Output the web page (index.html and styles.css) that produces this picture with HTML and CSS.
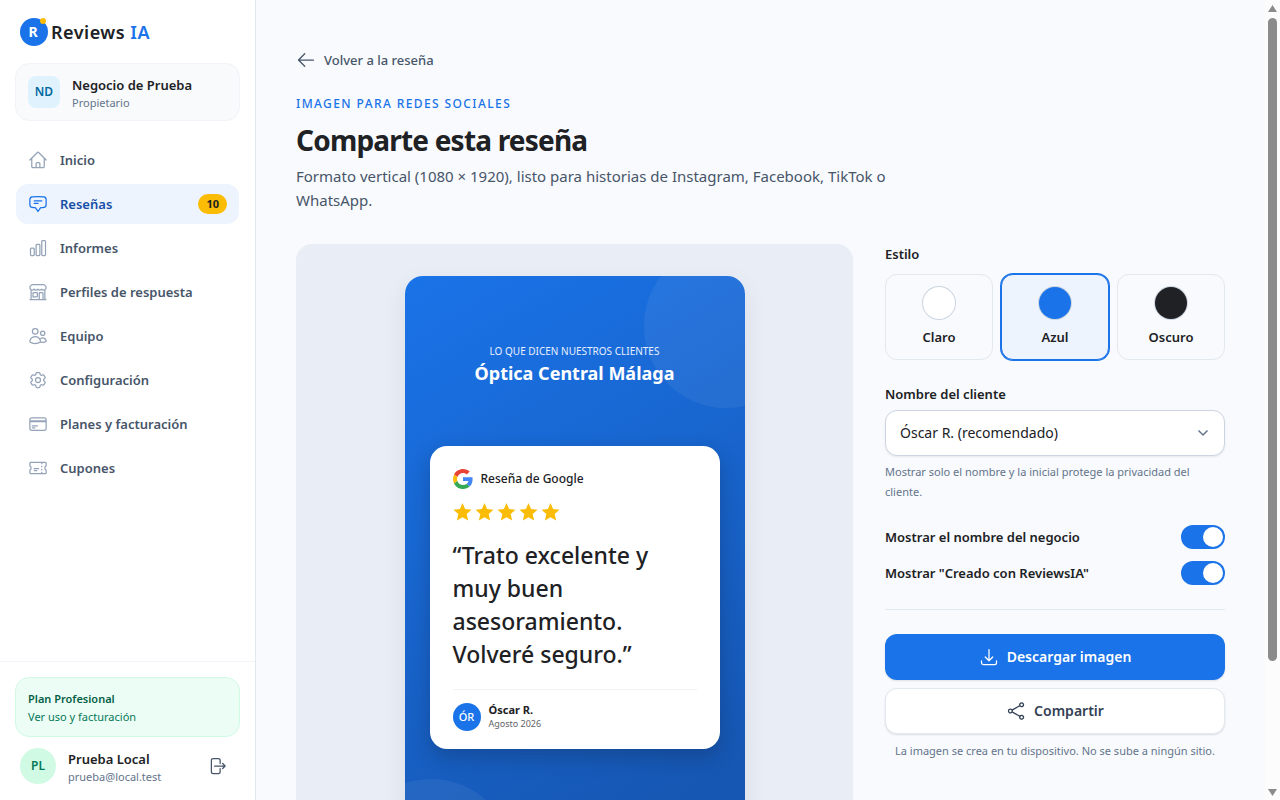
FILE: index.html
```html
<!DOCTYPE html>
<html lang="es">
<head>
<meta charset="utf-8">
<meta name="viewport" content="width=device-width, initial-scale=1">
<title>Comparte esta reseña</title>
<link rel="stylesheet" href="styles.css">
</head>
<body>
<div class="app">
  <aside class="sidebar">
    <a class="brand" href="#">
      <svg class="brand-mark" viewBox="0 0 28 28" aria-hidden="true"><circle cx="14" cy="14" r="14" fill="#1a73e8"/><text x="13" y="19" text-anchor="middle" class="brand-letter">R</text><circle cx="23" cy="3" r="3" fill="#fbbc05"/></svg>
      <span class="brand-name">Reviews <span class="brand-ia">IA</span></span>
    </a>
    <div class="business">
      <span class="business-avatar">ND</span>
      <div class="stack">
        <strong class="name">Negocio de Prueba</strong>
        <span class="meta">Propietario</span>
      </div>
    </div>
    <nav class="nav">
      <a href="#" class="nav-item"><svg class="icon" viewBox="0 0 24 24"><path d="M2.25 12l8.954-8.955c.44-.439 1.152-.439 1.591 0L21.75 12M4.5 9.75v10.125c0 .621.504 1.125 1.125 1.125H9.75v-4.875c0-.621.504-1.125 1.125-1.125h2.25c.621 0 1.125.504 1.125 1.125V21h4.125c.621 0 1.125-.504 1.125-1.125V9.75M8.25 21h8.25"/></svg><span>Inicio</span></a>
      <a href="#" class="nav-item active" aria-current="page"><svg class="icon" viewBox="0 0 24 24"><path d="M7.5 8.25h9m-9 3H12m-9.75 1.51c0 1.6 1.123 2.994 2.707 3.227 1.129.166 2.27.293 3.423.379.35.026.67.21.865.501L12 21l2.755-4.133a1.14 1.14 0 01.865-.501 48.172 48.172 0 003.423-.379c1.584-.233 2.707-1.626 2.707-3.228V6.741c0-1.602-1.123-2.995-2.707-3.228A48.394 48.394 0 0012 3c-2.392 0-4.744.175-7.043.513C3.373 3.746 2.25 5.14 2.25 6.741v6.018z"/></svg><span>Reseñas</span><span class="count">10</span></a>
      <a href="#" class="nav-item"><svg class="icon" viewBox="0 0 24 24"><path d="M3 13.125C3 12.504 3.504 12 4.125 12h2.25c.621 0 1.125.504 1.125 1.125v6.75C7.5 20.496 6.996 21 6.375 21h-2.25A1.125 1.125 0 013 19.875v-6.75zM9.75 8.625c0-.621.504-1.125 1.125-1.125h2.25c.621 0 1.125.504 1.125 1.125v11.25c0 .621-.504 1.125-1.125 1.125h-2.25a1.125 1.125 0 01-1.125-1.125V8.625zM16.5 4.125c0-.621.504-1.125 1.125-1.125h2.25C20.496 3 21 3.504 21 4.125v15.75c0 .621-.504 1.125-1.125 1.125h-2.25a1.125 1.125 0 01-1.125-1.125V4.125z"/></svg><span>Informes</span></a>
      <a href="#" class="nav-item"><svg class="icon" viewBox="0 0 24 24"><path d="M13.5 21v-7.5a.75.75 0 01.75-.75h3a.75.75 0 01.75.75V21m-4.5 0H2.36m11.14 0H18m0 0h3.64m-1.39 0V9.349m-16.5 11.65V9.35m0 0a3.001 3.001 0 003.75-.615A2.993 2.993 0 009.75 9.75c.896 0 1.7-.393 2.25-1.016a2.993 2.993 0 002.25 1.016c.896 0 1.7-.393 2.25-1.016a3.001 3.001 0 003.75.614m-16.5 0a3.004 3.004 0 01-.621-4.72L4.318 3.44A1.5 1.5 0 015.378 3h13.243a1.5 1.5 0 011.06.44l1.19 1.189a3 3 0 01-.621 4.72m-13.5 8.65h3.75a.75.75 0 00.75-.75V13.5a.75.75 0 00-.75-.75H6.75a.75.75 0 00-.75.75v3.75c0 .415.336.75.75.75z"/></svg><span>Perfiles de respuesta</span></a>
      <a href="#" class="nav-item"><svg class="icon" viewBox="0 0 24 24"><path d="M15 19.128a9.38 9.38 0 002.625.372 9.337 9.337 0 004.121-.952 4.125 4.125 0 00-7.533-2.493M15 19.128v-.003c0-1.113-.285-2.16-.786-3.07M15 19.128v.106A12.318 12.318 0 018.624 21c-2.331 0-4.512-.645-6.374-1.766l-.001-.109a6.375 6.375 0 0111.964-3.07M12 6.375a3.375 3.375 0 11-6.75 0 3.375 3.375 0 016.75 0zm8.25 2.25a2.625 2.625 0 11-5.25 0 2.625 2.625 0 015.25 0z"/></svg><span>Equipo</span></a>
      <a href="#" class="nav-item"><svg class="icon" viewBox="0 0 24 24"><path d="M9.594 3.94c.09-.542.56-.94 1.11-.94h2.593c.55 0 1.02.398 1.11.94l.213 1.281c.063.374.313.686.645.87.074.04.147.083.22.127.324.196.72.257 1.075.124l1.217-.456a1.125 1.125 0 011.37.49l1.296 2.247a1.125 1.125 0 01-.26 1.431l-1.003.827c-.293.24-.438.613-.431.992a6.759 6.759 0 010 .255c-.007.378.138.75.43.99l1.005.828c.424.35.534.954.26 1.43l-1.298 2.247a1.125 1.125 0 01-1.369.491l-1.217-.456c-.355-.133-.75-.072-1.076.124a6.57 6.57 0 01-.22.128c-.331.183-.581.495-.644.869l-.213 1.28c-.09.543-.56.941-1.11.941h-2.594c-.55 0-1.02-.398-1.11-.94l-.213-1.281c-.062-.374-.312-.686-.644-.87a6.52 6.52 0 01-.22-.127c-.325-.196-.72-.257-1.076-.124l-1.217.456a1.125 1.125 0 01-1.369-.49l-1.297-2.247a1.125 1.125 0 01.26-1.431l1.004-.827c.292-.24.437-.613.43-.992a6.932 6.932 0 010-.255c.007-.378-.138-.75-.43-.99l-1.004-.828a1.125 1.125 0 01-.26-1.43l1.297-2.247a1.125 1.125 0 011.37-.491l1.216.456c.356.133.751.072 1.076-.124.072-.044.146-.087.22-.128.332-.183.582-.495.644-.869l.214-1.281z"/><path d="M15 12a3 3 0 11-6 0 3 3 0 016 0z"/></svg><span>Configuración</span></a>
      <a href="#" class="nav-item"><svg class="icon" viewBox="0 0 24 24"><path d="M2.25 8.25h19.5M2.25 9h19.5m-16.5 5.25h6m-6 2.25h3m-3.75 3h15a2.25 2.25 0 002.25-2.25V6.75A2.25 2.25 0 0019.5 4.5h-15a2.25 2.25 0 00-2.25 2.25v10.5A2.25 2.25 0 004.5 19.5z"/></svg><span>Planes y facturación</span></a>
      <a href="#" class="nav-item"><svg class="icon" viewBox="0 0 24 24"><path d="M16.5 6v.75m0 3v.75m0 3v.75m0 3V18m-9-5.25h5.25M7.5 15h3M3.375 5.25c-.621 0-1.125.504-1.125 1.125v3.026a2.999 2.999 0 010 5.198v3.026c0 .621.504 1.125 1.125 1.125h17.25c.621 0 1.125-.504 1.125-1.125v-3.026a2.999 2.999 0 010-5.198V6.375c0-.621-.504-1.125-1.125-1.125H3.375z"/></svg><span>Cupones</span></a>
    </nav>
    <div class="sidebar-foot">
      <a class="plan" href="#"><strong class="plan-name">Plan Profesional</strong><span>Ver uso y facturación</span></a>
      <div class="user">
        <span class="user-avatar">PL</span>
        <div class="stack">
          <strong class="name">Prueba Local</strong>
          <span class="meta">prueba@local.test</span>
        </div>
        <button class="logout" type="button" aria-label="Cerrar sesión"><svg class="icon" viewBox="0 0 24 24"><path d="M15.75 9V5.25A2.25 2.25 0 0013.5 3h-6a2.25 2.25 0 00-2.25 2.25v13.5A2.25 2.25 0 007.5 21h6a2.25 2.25 0 002.25-2.25V15m3 0l3-3m0 0l-3-3m3 3H9"/></svg></button>
      </div>
    </div>
  </aside>

  <main class="main">
    <a class="back" href="#"><svg class="icon" viewBox="0 0 24 24"><path d="M10.5 19.5L3 12m0 0l7.5-7.5M3 12h18"/></svg>Volver a la reseña</a>
    <header class="head">
      <p class="eyebrow">IMAGEN PARA REDES SOCIALES</p>
      <h1>Comparte esta reseña</h1>
      <p class="lead">Formato vertical (1080 × 1920), listo para historias de Instagram, Facebook, TikTok o WhatsApp.</p>
    </header>
    <div class="editor">
      <section class="preview" aria-label="Vista previa">
        <div class="poster">
          <p class="poster-kicker">LO QUE DICEN NUESTROS CLIENTES</p>
          <p class="poster-title">Óptica Central Málaga</p>
          <article class="review">
            <div class="source">
              <svg class="google" viewBox="0 0 48 48" aria-hidden="true"><path fill="#ea4335" d="M24 9.5c3.54 0 6.71 1.22 9.21 3.6l6.85-6.85C35.9 2.38 30.47 0 24 0 14.62 0 6.51 5.38 2.56 13.22l7.98 6.19C12.43 13.72 17.74 9.5 24 9.5z"/><path fill="#4285f4" d="M46.98 24.55c0-1.57-.15-3.09-.38-4.55H24v9.02h12.94c-.58 2.96-2.26 5.48-4.78 7.18l7.73 6c4.51-4.18 7.09-10.36 7.09-17.65z"/><path fill="#fbbc05" d="M10.53 28.59c-.48-1.45-.76-2.99-.76-4.59s.27-3.14.76-4.59l-7.98-6.19C.92 16.46 0 20.12 0 24c0 3.88.92 7.54 2.56 10.78l7.97-6.19z"/><path fill="#34a853" d="M24 48c6.48 0 11.93-2.13 15.89-5.81l-7.73-6c-2.15 1.45-4.92 2.3-8.16 2.3-6.26 0-11.57-4.22-13.47-9.91l-7.98 6.19C6.51 42.62 14.62 48 24 48z"/></svg>
              <span>Reseña de Google</span>
            </div>
            <div class="stars" role="img" aria-label="5 de 5 estrellas">
              <svg viewBox="0 0 20 20"><path d="M9.500 1l2.600 6.100 6.400.6-4.800 4.400 1.400 6.500-5.600-3.400-5.600 3.400 1.400-6.500L.5 7.700l6.400-.6z"/></svg>
              <svg viewBox="0 0 20 20"><path d="M9.500 1l2.600 6.100 6.400.6-4.800 4.400 1.400 6.500-5.600-3.400-5.600 3.400 1.400-6.500L.5 7.700l6.400-.6z"/></svg>
              <svg viewBox="0 0 20 20"><path d="M9.500 1l2.600 6.100 6.400.6-4.800 4.400 1.400 6.500-5.600-3.400-5.600 3.400 1.400-6.500L.5 7.700l6.400-.6z"/></svg>
              <svg viewBox="0 0 20 20"><path d="M9.500 1l2.600 6.100 6.400.6-4.800 4.400 1.400 6.500-5.600-3.400-5.600 3.400 1.400-6.500L.5 7.700l6.400-.6z"/></svg>
              <svg viewBox="0 0 20 20"><path d="M9.500 1l2.600 6.100 6.400.6-4.800 4.400 1.400 6.500-5.600-3.400-5.600 3.400 1.400-6.500L.5 7.700l6.400-.6z"/></svg>
            </div>
            <p class="quote">“Trato excelente y muy buen asesoramiento. Volveré seguro.”</p>
            <footer class="author">
              <span class="author-avatar">ÓR</span>
              <div class="stack">
                <strong class="author-name">Óscar R.</strong>
                <span class="author-date">Agosto 2026</span>
              </div>
            </footer>
          </article>
        </div>
      </section>

      <form class="controls">
        <div class="field" role="group" aria-labelledby="style-label">
          <span class="label" id="style-label">Estilo</span>
          <div class="styles">
            <button type="button" class="style-option" aria-pressed="false"><span class="swatch light"></span>Claro</button>
            <button type="button" class="style-option" aria-pressed="true"><span class="swatch blue"></span>Azul</button>
            <button type="button" class="style-option" aria-pressed="false"><span class="swatch dark"></span>Oscuro</button>
          </div>
        </div>
        <div class="field customer">
          <label class="label" for="customer">Nombre del cliente</label>
          <div class="select-wrap">
            <select id="customer"><option>Óscar R. (recomendado)</option></select>
            <svg class="chevron" viewBox="0 0 12 12" aria-hidden="true"><path d="M1.500 3.500L6 8l4.500-4.500"/></svg>
          </div>
          <p class="help">Mostrar solo el nombre y la inicial protege la privacidad del cliente.</p>
        </div>
        <div class="switches">
          <label class="switch-row" for="show-name">Mostrar el nombre del negocio<input id="show-name" class="switch" type="checkbox" role="switch" checked></label>
          <label class="switch-row" for="show-credit">Mostrar "Creado con ReviewsIA"<input id="show-credit" class="switch" type="checkbox" role="switch" checked></label>
        </div>
        <div class="actions">
          <button type="button" class="btn primary"><svg class="icon" viewBox="0 0 24 24"><path d="M3 16.5v2.25A2.25 2.25 0 005.25 21h13.5A2.25 2.25 0 0021 18.75V16.5M16.5 12L12 16.5m0 0L7.5 12m4.500 4.500V3"/></svg>Descargar imagen</button>
          <button type="button" class="btn secondary"><svg class="icon" viewBox="0 0 24 24"><path d="M7.217 10.907a2.250 2.250 0 100 2.186m0-2.186c.18.324.283.696.283 1.093s-.103.770-.283 1.093m0-2.186l9.566-5.314m-9.566 7.500l9.566 5.314m0 0a2.250 2.250 0 103.935 2.186 2.250 2.250 0 00-3.935-2.186zm0-12.814a2.250 2.250 0 103.933-2.185 2.250 2.250 0 00-3.933 2.185z"/></svg>Compartir</button>
          <p class="note">La imagen se crea en tu dispositivo. No se sube a ningún sitio.</p>
        </div>
      </form>
    </div>
  </main>
  <div class="scrollbar" aria-hidden="true">
    <svg class="arrow" viewBox="0 0 9 7"><path d="M4.500 0L9 7H0z"/></svg>
    <div class="track"><div class="thumb"></div></div>
    <svg class="arrow" viewBox="0 0 9 7"><path d="M0 0h9L4.500 7z"/></svg>
  </div>
</div>
</body>
</html>
```
FILE: styles.css
```css
* { box-sizing: border-box; }
body {
  margin: 0;
  font-family: "Noto Sans", "Open Sans", sans-serif;
  font-size: 13px;
  line-height: 20px;
  color: #202124;
  background: #f8fafd;
}
p, h1 { margin: 0; }
a { color: inherit; text-decoration: none; }
button, select { font: inherit; color: inherit; cursor: pointer; }
strong { font-weight: 600; }
.app {
  display: grid;
  grid-template-columns: 256px minmax(0, 1fr) 15px;
  height: 100vh;
  overflow: hidden;
}
.icon {
  width: 20px;
  height: 20px;
  flex: none;
  fill: none;
  stroke: currentColor;
  stroke-width: 1.5;
  stroke-linecap: round;
  stroke-linejoin: round;
}
.stack { display: flex; flex-direction: column; min-width: 0; }

/* Sidebar */
.sidebar {
  display: flex;
  flex-direction: column;
  min-height: 0;
  background: #fff;
  border-right: 1px solid #e2e8f0;
}
.brand {
  display: flex;
  align-items: center;
  gap: 3px;
  padding: 18px 20px 17px;
}
.brand-mark { width: 28px; height: 28px; overflow: visible; }
.brand-letter { font-size: 14px; font-weight: 700; fill: #fff; }
.brand-name { font-size: 18px; font-weight: 600; line-height: 28px; letter-spacing: 0.5px; }
.brand-ia { color: #1a73e8; }
.business {
  display: flex;
  align-items: center;
  gap: 12px;
  margin: 0 15px;
  padding: 9px 12px;
  border: 1px solid #f1f5f9;
  border-radius: 14px;
  background: #f8fafc;
}
.business-avatar {
  display: grid;
  place-items: center;
  width: 32px;
  height: 32px;
  border-radius: 8px;
  background: #e0f2fe;
  color: #0369a1;
  font-size: 12px;
  font-weight: 600;
}
.name { padding-top: 2px; line-height: 20px; }
.meta { font-size: 11px; line-height: 16px; color: #64748b; }
.nav {
  display: flex;
  flex-direction: column;
  flex: 1;
  gap: 4px;
  padding: 19px 16px;
}
.nav-item {
  display: flex;
  align-items: center;
  gap: 12px;
  height: 40px;
  padding: 0 12px;
  border-radius: 12px;
  font-weight: 600;
  color: #475569;
}
.nav-item .icon { color: #94a3b8; }
.nav-item.active { background: #edf4fe; color: #174ea6; }
.nav-item.active .icon { color: #1a73e8; }
.count {
  margin-left: auto;
  padding: 0 8px;
  border-radius: 10px;
  background: #fbbc05;
  color: #202124;
  font-size: 11px;
  font-weight: 700;
}
.sidebar-foot {
  display: flex;
  flex-direction: column;
  gap: 10px;
  padding: 15px;
  border-top: 1px solid #f1f5f9;
}
.plan {
  display: flex;
  flex-direction: column;
  padding: 12px 12px 10px;
  border: 1px solid #d1fae5;
  border-radius: 14px;
  background: #ecfdf5;
  color: #047857;
  font-size: 11px;
  line-height: 18px;
}
.plan-name { color: #065f46; }
.user { display: flex; align-items: center; gap: 12px; padding: 0 5px; }
.user-avatar {
  display: grid;
  place-items: center;
  width: 36px;
  height: 36px;
  border-radius: 50%;
  background: #d1fae5;
  color: #047857;
  font-size: 12px;
  font-weight: 600;
}
.logout {
  display: grid;
  place-items: center;
  margin-left: auto;
  padding: 8px;
  border: 0;
  background: none;
  color: #475569;
}

/* Main column */
.main { min-width: 0; overflow-y: auto; padding: 50px 40px 40px; }
.back {
  display: inline-flex;
  align-items: center;
  gap: 8px;
  vertical-align: top;
  font-weight: 500;
  color: #475569;
}
.head { max-width: 640px; padding: 24px 0 32px; }
.eyebrow { font-size: 12px; font-weight: 500; letter-spacing: 1.4px; color: #1a73e8; }
h1 { margin: 8px 0 6px; font-size: 28px; line-height: 36px; font-weight: 700; letter-spacing: -0.8px; }
.lead { font-size: 15px; line-height: 24px; color: #475569; }
.editor {
  display: grid;
  grid-template-columns: minmax(0, 1fr) 340px;
  gap: 32px;
  align-items: start;
}

/* Poster preview */
.preview {
  display: flex;
  justify-content: center;
  padding: 32px;
  border-radius: 16px;
  background: #e9eef6;
}
.poster {
  position: relative;
  overflow: hidden;
  display: flex;
  flex-direction: column;
  flex: 0 1 340px;
  aspect-ratio: 9 / 16;
  padding: 66px 25px;
  border-radius: 18px;
  background: linear-gradient(150deg, #1a73e8, #1657b3 85%);
  box-shadow: 0 8px 24px rgba(15, 23, 42, 0.08);
  color: #fff;
  text-align: center;
}
.poster::before,
.poster::after {
  content: "";
  position: absolute;
  width: 164px;
  height: 164px;
  border-radius: 50%;
  background: rgba(255, 255, 255, 0.06);
}
.poster::before { top: -32px; right: -63px; }
.poster::after { bottom: -63px; left: -56px; }
.poster-kicker { position: relative; font-size: 10px; line-height: 18px; color: #e8f0fe; }
.poster-title { position: relative; font-size: 18px; line-height: 26px; font-weight: 700; }
.review {
  position: relative;
  z-index: 1;
  margin-top: 60px;
  padding: 23px 23px 18px;
  border-radius: 17px;
  background: #fff;
  box-shadow: 0 8px 20px rgba(15, 23, 42, 0.25);
  color: #202124;
  text-align: left;
}
.source { display: flex; align-items: center; gap: 8px; font-size: 12px; font-weight: 500; }
.google { width: 20px; height: 20px; }
.stars { display: flex; gap: 2px; margin: 13px 0 17px; }
.stars svg { width: 20px; height: 20px; fill: #fbbc05; }
.quote { font-size: 23px; line-height: 33px; font-weight: 500; }
.author {
  display: flex;
  align-items: center;
  gap: 8px;
  margin-top: 18px;
  padding-top: 12px;
  border-top: 1px solid #f1f3f4;
}
.author-avatar {
  display: grid;
  place-items: center;
  width: 28px;
  height: 28px;
  border-radius: 50%;
  background: #1a73e8;
  color: #fff;
  font-size: 11px;
  font-weight: 500;
}
.author-name { font-size: 11px; line-height: 15px; font-weight: 700; }
.author-date { font-size: 9px; line-height: 14px; color: #5f6368; }

/* Controls */
.label { display: block; font-weight: 600; }
.styles { display: grid; grid-template-columns: repeat(3, 1fr); gap: 8px; margin-top: 10px; }
.style-option {
  display: flex;
  flex-direction: column;
  align-items: center;
  gap: 8px;
  padding: 12px 8px;
  border: 1px solid #e2e8f0;
  border-radius: 12px;
  background: transparent;
  font-weight: 600;
}
.style-option[aria-pressed="true"] {
  border-color: #1a73e8;
  background: #edf4fe;
  box-shadow: 0 0 0 1px #1a73e8;
}
.swatch { width: 32px; height: 32px; border-radius: 50%; box-shadow: 0 0 0 1px #cbd5e1; }
.light { background: #fff; }
.blue { background: #1a73e8; }
.dark { background: #202124; }
.customer { margin-top: 24px; }
.select-wrap { display: grid; align-items: center; margin-top: 6px; }
.select-wrap > * { grid-area: 1 / 1; }
.select-wrap select {
  appearance: none;
  width: 100%;
  height: 46px;
  padding: 0 14px;
  border: 1px solid #cbd5e1;
  border-radius: 12px;
  background: #fff;
  box-shadow: 0 1px 2px rgba(15, 23, 42, 0.08);
  font-size: 14px;
}
.chevron {
  justify-self: end;
  width: 12px;
  height: 12px;
  margin-right: 16px;
  fill: none;
  stroke: #64748b;
  stroke-width: 1.5;
  pointer-events: none;
}
.help { margin-top: 6px; font-size: 11px; color: #64748b; }
.switches { display: flex; flex-direction: column; gap: 12px; margin-top: 23px; }
.switch-row {
  display: flex;
  align-items: center;
  justify-content: space-between;
  font-weight: 600;
}
.switch {
  appearance: none;
  display: flex;
  justify-content: flex-end;
  width: 44px;
  height: 24px;
  margin: 0;
  padding: 2px;
  border-radius: 12px;
  background: #94a3b8;
  cursor: pointer;
}
.switch::before { content: ""; width: 20px; height: 20px; border-radius: 50%; background: #fff; }
.switch:checked { background: #1a73e8; }
.switch:not(:checked) { justify-content: flex-start; }
.actions {
  display: flex;
  flex-direction: column;
  gap: 8px;
  margin-top: 24px;
  padding-top: 24px;
  border-top: 1px solid #e2e8f0;
}
.btn {
  display: flex;
  align-items: center;
  justify-content: center;
  gap: 8px;
  min-height: 46px;
  border: 0;
  border-radius: 12px;
  font-size: 14px;
  font-weight: 600;
  box-shadow: 0 1px 2px rgba(15, 23, 42, 0.12);
}
.primary { background: #1a73e8; color: #fff; }
.secondary { border: 1px solid #e2e8f0; background: #fff; color: #334155; }
.note { font-size: 11px; line-height: 18px; text-align: center; color: #64748b; }

/* Scroll rail */
.scrollbar {
  display: flex;
  flex-direction: column;
  align-items: center;
  gap: 6px;
  padding: 5px 0 4px;
  background: #fcfcfc;
}
.arrow { width: 9px; height: 7px; fill: #8b8b8b; }
.track { flex: 1; width: 9px; }
.thumb { height: 84%; border-radius: 5px; background: #8b8b8b; }
```
